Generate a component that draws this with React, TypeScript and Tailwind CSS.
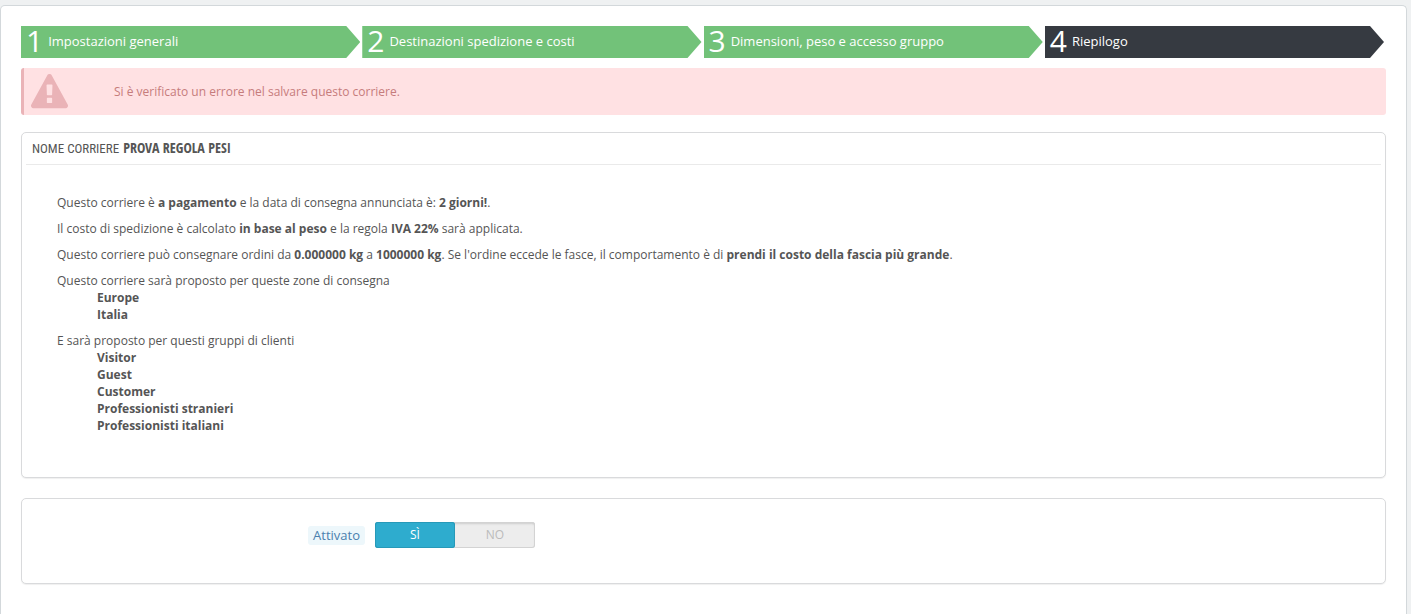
import { useState } from "react";
import clsx from "clsx";

const steps = [
  "Impostazioni generali",
  "Destinazioni spedizione e costi",
  "Dimensioni, peso e accesso gruppo",
  "Riepilogo",
];

const zones = ["Europe", "Italia"];

const groups = [
  "Visitor",
  "Guest",
  "Customer",
  "Professionisti stranieri",
  "Professionisti italiani",
];

const currentStep = 3;

function Steps() {
  return (
    <nav aria-label="Passaggi">
      <ol className="grid grid-cols-4">
        {steps.map((label, index) => (
          <li key={label} className="pr-0.5">
            <a
              href={`#step-${index + 1}`}
              aria-current={index === currentStep ? "step" : undefined}
              className={clsx(
                "flex h-8 items-center gap-[5px] pb-0.5 pl-[5px] text-white [clip-path:polygon(0_0,calc(100%-14px)_0,100%_50%,calc(100%-14px)_100%,0_100%)]",
                index === currentStep ? "bg-[#363a41]" : "bg-[#72c279]",
              )}
            >
              <span className="text-[30px] leading-8">{index + 1}</span>
              <span className="text-[13px] leading-8">{label}</span>
            </a>
          </li>
        ))}
      </ol>
    </nav>
  );
}

function ErrorAlert() {
  return (
    <div
      role="alert"
      className="mt-2.5 flex h-[47px] items-center rounded-[3px] border-l-[3px] border-[#eab3b7] bg-[#ffe1e3] pl-[7px] text-xs text-[#c67c7c]"
    >
      <svg viewBox="0 0 1792 1664" className="w-[37px] shrink-0" fill="#eab3b7" aria-hidden="true">
        <path d="M1024 1247v-190q0-14-9.500-23.500t-22.500-9.500h-192q-13 0-22.500 9.500t-9.500 23.500v190q0 14 9.500 23.500t22.500 9.500h192q13 0 22.500-9.500t9.500-23.500zm-2-374l18-459q0-12-10-19-13-11-24-11h-220q-11 0-24 11-10 7-10 21l17 457q0 10 10 16.500t24 6.500h185q14 0 23.500-6.500t10.500-16.500zm-14-934l768 1408q35 63-2 126-17 29-46.500 46t-63.500 17h-1536q-34 0-63.500-17t-46.500-46q-37-63-2-126l768-1408q17-31 47-49t65-18 65 18 47 49z" transform="translate(0 128)" />
      </svg>
      <p className="pl-[46px]">Si è verificato un errore nel salvare questo corriere.</p>
    </div>
  );
}

function NameList({ items }: { items: string[] }) {
  return (
    <ul className="pl-10 font-bold">
      {items.map((item) => (
        <li key={item}>{item}</li>
      ))}
    </ul>
  );
}

function Summary() {
  return (
    <section className="mt-[17px] rounded-[5px] border border-[#d9dadc] bg-white px-1 pb-[43px] shadow-[0_1px_1px_#f0f0f0]">
      <h2 className="flex h-8 items-baseline gap-1 border-b border-[#eaeaea] pl-1.5 uppercase">
        <span className="font-['Roboto_Condensed','Open_Sans',sans-serif] text-[13px] leading-[30px]">
          Nome corriere
        </span>
        <strong className="font-['Open_Sans_Condensed','Open_Sans',sans-serif] text-sm leading-[30px]">
          prova regola pesi
        </strong>
      </h2>
      <div className="flex flex-col gap-[9px] px-[31px] pt-[29px] text-xs leading-[17px]">
        <p>
          Questo corriere è <strong>a pagamento</strong> e la data di consegna annunciata è: <strong>2 giorni!</strong>.
        </p>
        <p>
          Il costo di spedizione è calcolato <strong>in base al peso</strong> e la regola <strong>IVA 22%</strong> sarà
          applicata.
        </p>
        <p>
          Questo corriere può consegnare ordini da <strong>0.000000 kg</strong> a <strong>1000000 kg</strong>. Se
          l'ordine eccede le fasce, il comportamento è di <strong>prendi il costo della fascia più grande</strong>.
        </p>
        <div>
          <p>Questo corriere sarà proposto per queste zone di consegna</p>
          <NameList items={zones} />
        </div>
        <div>
          <p>E sarà proposto per questi gruppi di clienti</p>
          <NameList items={groups} />
        </div>
      </div>
    </section>
  );
}

function ActiveSwitch() {
  const [active, setActive] = useState(true);
  const options = [
    { label: "Sì", value: true },
    { label: "No", value: false },
  ];
  return (
    <section className="mt-5 rounded-[5px] border border-[#d9dadc] bg-white pt-[23px] pb-[35px] shadow-[0_1px_1px_#f0f0f0]">
      <div className="flex items-center gap-2.5 pl-[3px]">
        <div className="flex w-1/4 justify-end">
          <span id="active-label" className="rounded-[3px] bg-[#edf7fb] px-[5px] text-[13px] leading-[19px] text-[#4a7fae]">
            Attivato
          </span>
        </div>
        <div
          role="radiogroup"
          aria-labelledby="active-label"
          className="flex h-[26px] w-40 rounded-[3px] bg-[#ededed] text-xs leading-[26px] uppercase shadow-[inset_0_0_0_1px_#d3d3d3,inset_0_2px_2px_#cfcfcf]"
        >
          {options.map(({ label, value }) => (
            <label
              key={label}
              className={clsx(
                "flex-1 cursor-pointer rounded-[3px] text-center",
                active === value ? "bg-[#2eacce] text-white shadow-[inset_0_0_0_1px_#2799b8]" : "text-[#bbbbbb]",
              )}
            >
              <input
                type="radio"
                name="active"
                className="sr-only"
                checked={active === value}
                onChange={() => setActive(value)}
              />
              {label}
            </label>
          ))}
        </div>
      </div>
    </section>
  );
}

export default function App() {
  return (
    <div className="flex min-h-screen flex-col bg-[#eff1f2] pt-[5px] pr-1 font-['Open_Sans',sans-serif] text-[#555555]">
      <main className="flex-1 rounded-t-[5px] border border-b-0 border-[#d3d8db] bg-white px-5 pt-5 pb-[30px]">
        <Steps />
        <ErrorAlert />
        <Summary />
        <ActiveSwitch />
      </main>
    </div>
  );
}
